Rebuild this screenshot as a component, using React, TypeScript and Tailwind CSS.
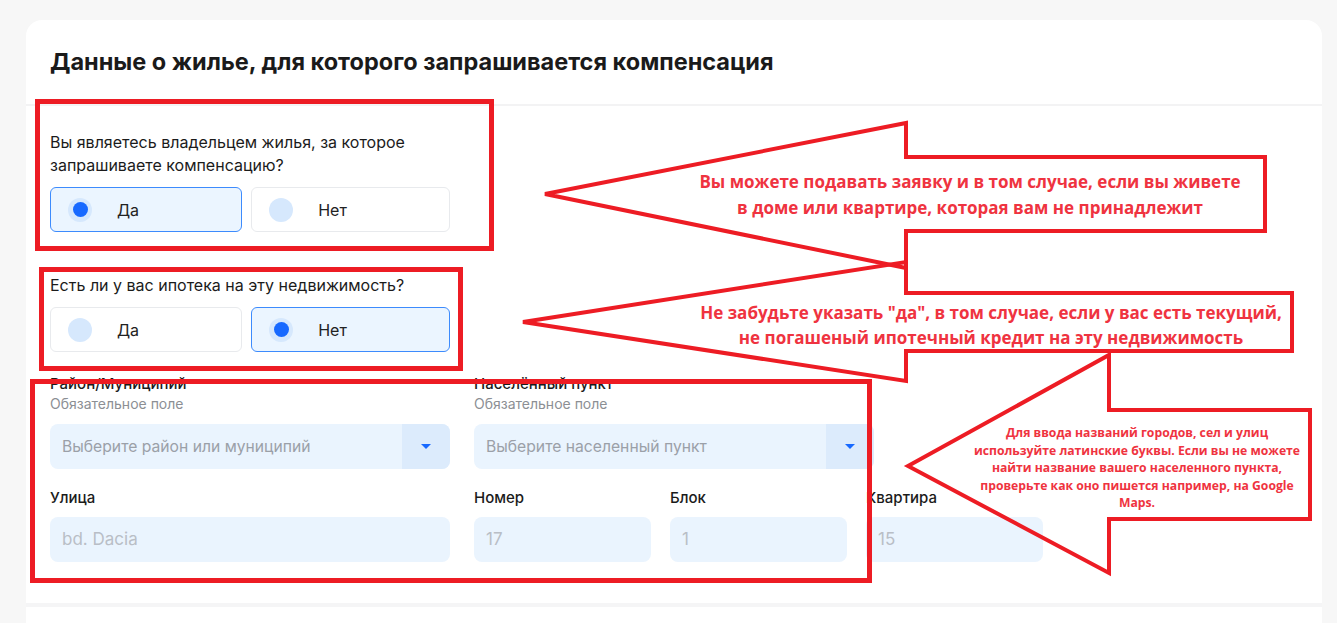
const RED = "#ed1c24";

function Radio({ label, checked }: { label: string; checked?: boolean }) {
  return (
    <div
      className={`flex h-[45px] grow basis-auto items-center rounded-md border pl-[17px] ${
        checked ? "border-[#3d8bfd] bg-[#ebf5ff]" : "border-[#e8eaed] bg-white"
      }`}
    >
      <span className="flex h-6 w-6 items-center justify-center rounded-full bg-[#d6e8fd]">
        {checked && <span className="h-[15px] w-[15px] rounded-full bg-[#1769ff]" />}
      </span>
      <span className="ml-[25px] text-[16px] text-[#222]">{label}</span>
    </div>
  );
}

function Question({ text, yes }: { text: string; yes: boolean }) {
  return (
    <div className="w-[400px]">
      <p className="text-[16px] leading-[23px] text-[#1b1b1b]">{text}</p>
      <div className="mt-[10px] flex gap-[9px]">
        <Radio label="Да" checked={yes} />
        <Radio label="Нет" checked={!yes} />
      </div>
    </div>
  );
}

function Select({ label, placeholder }: { label: string; placeholder: string }) {
  return (
    <div className="w-[400px]">
      <div className="text-[15px] leading-[23px] font-medium text-[#1b1b1b]">{label}</div>
      <div className="text-[14px] leading-[18px] text-[#8c8f94]">Обязательное поле</div>
      <div className="mt-[11px] flex h-[45px] overflow-hidden rounded-lg bg-[#eaf4fe]">
        <span className="flex flex-1 items-center pl-3 text-[15.7px] text-[#9ba0a8]">{placeholder}</span>
        <span className="flex w-12 items-center justify-center bg-[#dcebfc]">
          <svg width="10" height="5" viewBox="0 0 10 5">
            <path d="M0 0h10L5 5z" fill="#1769ff" />
          </svg>
        </span>
      </div>
    </div>
  );
}

function Field({ label, placeholder, width }: { label: string; placeholder: string; width: string }) {
  return (
    <div className={width}>
      <div className="text-[15px] leading-[23px] font-medium text-[#1b1b1b]">{label}</div>
      <div className="mt-[8px] flex h-[45px] items-center rounded-lg bg-[#eaf4fe] pl-3 text-[17px] text-[#b9bec6]">
        {placeholder}
      </div>
    </div>
  );
}

function Overlay() {
  return (
    <div className="pointer-events-none absolute left-0 top-0 h-[623px] w-[1337px]">
      <svg width="1337" height="623" className="absolute left-0 top-0">
        <g fill="none" stroke={RED}>
          <rect x="37.5" y="101.5" width="454" height="147" strokeWidth="5" />
          <rect x="41.5" y="269.5" width="419" height="99" strokeWidth="5" />
          <rect x="32.5" y="381.5" width="837" height="199" strokeWidth="5" />
          <polygon points="545,194 906,123 906,157 1265,157 1265,231 906,231 906,268" strokeWidth="4" />
          <polygon points="523,322 906,262 906,293 1292,293 1292,351 906,351 906,381" strokeWidth="4" />
          <polygon points="908,466 1109,355 1109,410 1310,410 1310,519 1109,519 1109,573" strokeWidth="4" />
        </g>
      </svg>
      <div className="absolute left-[640px] top-[169px] w-[660px] text-center font-['Open_Sans'] text-[17px] font-bold leading-[26px] text-[#ef3340]">
        Вы можете подавать заявку и в том случае, если вы живете
        <br />в доме или квартире, которая вам не принадлежит
      </div>
      <div className="absolute left-[651px] top-[300px] w-[680px] text-center font-['Open_Sans'] text-[17px] font-bold leading-[25px] text-[#ef3340]">
        Не забудьте указать "да", в том случае, если у вас есть текущий,
        <br />
        не погашеный ипотечный кредит на эту недвижимость
      </div>
      <div className="absolute left-[957px] top-[424px] w-[360px] text-center font-['Open_Sans'] text-[12.2px] font-bold leading-[17.5px] text-[#ef3340]">
        Для ввода названий городов, сел и улиц
        <br />
        используйте латинские буквы. Если вы не можете
        <br />
        найти название вашего населенного пункта,
        <br />
        проверьте как оно пишется например, на Google
        <br />
        Maps.
      </div>
    </div>
  );
}

export default function App() {
  return (
    <div className="relative h-[623px] w-[1337px] overflow-hidden bg-[#f7f7f7] pt-5 font-['Inter',sans-serif]">
      <div className="ml-[26px] w-[1296px] rounded-2xl bg-white">
        <div className="border-b-2 border-[#f3f3f4] px-6 py-[28px]">
          <h1 className="text-[23.5px] leading-[28px] font-bold text-[#1a1a1a]">
            Данные о жилье, для которого запрашивается компенсация
          </h1>
        </div>
        <div className="border-b-4 border-[#f5f5f6] px-6 pt-[25px] pb-[41px]">
          <Question text="Вы являетесь владельцем жилья, за которое запрашиваете компенсацию?" yes={true} />
          <div className="mt-[42px]">
            <Question text="Есть ли у вас ипотека на эту недвижимость?" yes={false} />
          </div>
          <div className="mt-[20px] flex gap-6">
            <Select label="Район/Муниципий" placeholder="Выберите район или муниципий" />
            <Select label="Населённый пункт" placeholder="Выберите населенный пункт" />
          </div>
          <div className="mt-[17px] flex gap-6">
            <Field label="Улица" placeholder="bd. Dacia" width="w-[400px]" />
            <div className="flex gap-[19px]">
              <Field label="Номер" placeholder="17" width="w-[177px]" />
              <Field label="Блок" placeholder="1" width="w-[177px]" />
              <Field label="Квартира" placeholder="15" width="w-[177px]" />
            </div>
          </div>
        </div>
        <div className="h-[200px]" />
      </div>
      <Overlay />
    </div>
  );
}
